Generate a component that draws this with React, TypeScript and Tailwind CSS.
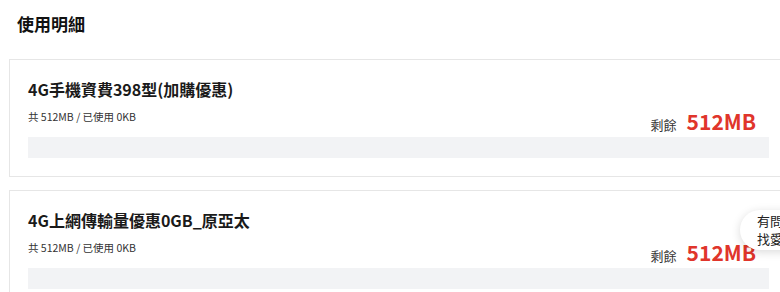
const plans = [
  { name: "4G手機資費398型(加購優惠)", total: "512MB", used: "0KB", left: "512MB" },
  { name: "4G上網傳輸量優惠0GB_原亞太", total: "512MB", used: "0KB", left: "512MB" },
];

function UsageCard({ plan }: { plan: (typeof plans)[number] }) {
  return (
    <div className="w-[779px] border border-[#e6e6e6] bg-white px-[18px] pt-[17px] pb-[18px]">
      <div className="flex items-end justify-between">
        <div className="pb-[12px]">
          <h3 className="text-[16px] leading-[24px] font-bold text-[#1a1a1a]">
            {plan.name}
          </h3>
          <p className="mt-2 text-[10.5px] leading-[16px] text-[#333]">
            共 {plan.total} / 已使用 {plan.used}
          </p>
        </div>
        <div className="mr-[13px] mb-[3px] flex items-baseline gap-[10px]">
          <span className="text-[13px] text-[#333]">剩餘</span>
          <span className="text-[21px] leading-[26px] font-bold text-[#e0352b]">
            {plan.left}
          </span>
        </div>
      </div>
      <div className="h-[21px] w-full bg-[#f2f3f5]" />
    </div>
  );
}

export default function App() {
  return (
    <div
      className="relative h-[292px] w-[780px] overflow-hidden bg-white"
      style={{ fontFamily: '"Noto Sans CJK TC", "Noto Sans", sans-serif' }}
    >
      <h2 className="pt-[12px] pl-[17px] text-[17px] leading-[24px] font-bold text-[#111]">
        使用明細
      </h2>
      <div className="mt-[23px] flex flex-col gap-[13px] pl-[9px]">
        {plans.map((p) => (
          <UsageCard key={p.name} plan={p} />
        ))}
      </div>

      {/* floating help bubble */}
      <div className="absolute top-[210px] left-[740px] w-[60px] rounded-l-full bg-white py-[2px] pl-[17px] text-[13px] leading-[18px] text-[#222] shadow-[0_2px_10px_rgba(0,0,0,0.15)]">
        <div>有問</div>
        <div>找愛</div>
      </div>
    </div>
  );
}
